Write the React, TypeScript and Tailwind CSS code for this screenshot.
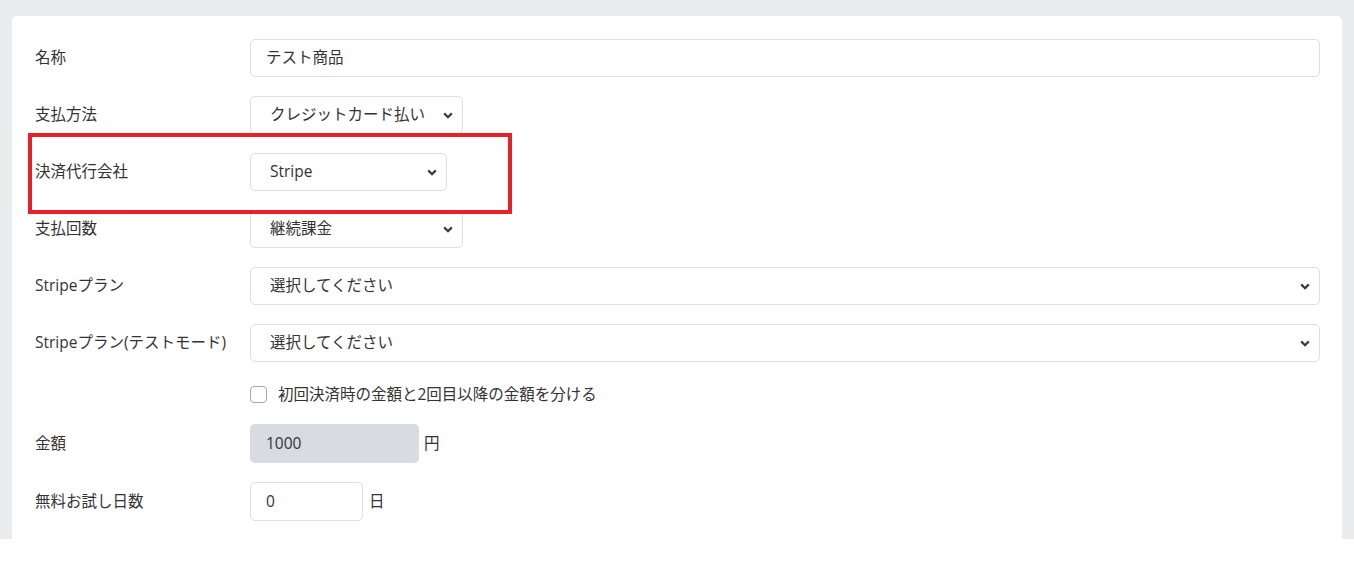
import type { ReactNode } from "react";

const font = { fontFamily: '"Open Sans", "Noto Sans CJK JP", sans-serif' };

function Chevron() {
  return (
    <svg width="10" height="7" viewBox="0 0 10 7" className="shrink-0">
      <path d="M1.2 1.4 L5 5.2 L8.8 1.4" fill="none" stroke="#343a40" strokeWidth="2.2" />
    </svg>
  );
}

function Row({ label, children }: { label?: string; children: ReactNode }) {
  return (
    <div className="flex items-center min-h-[38px]">
      <div className="w-[215px] shrink-0 text-[15.5px] text-[#333]">{label}</div>
      <div className="flex-1 flex items-center">{children}</div>
    </div>
  );
}

function Select({ value, className }: { value: string; className: string }) {
  return (
    <div
      className={`h-[38px] flex items-center justify-between border border-[#dcdfe3] rounded-[5px] bg-white pl-[19px] pr-[9px] text-[15.5px] text-[#333] ${className}`}
    >
      <span>{value}</span>
      <Chevron />
    </div>
  );
}

export default function App() {
  return (
    <div className="h-[539px] overflow-hidden bg-[#ebecee] px-3 pt-4" style={font}>
      <div className="bg-white rounded-[5px] pl-[23px] pr-[22px] pt-[23px] pb-20 flex flex-col gap-[19px]">
        <Row label="名称">
          <div className="h-[38px] w-full flex items-center border border-[#dcdfe3] rounded-[5px] pl-[15px] text-[15.5px] text-[#333]">
            テスト商品
          </div>
        </Row>
        <Row label="支払方法">
          <Select value="クレジットカード払い" className="w-[213px]" />
        </Row>
        <div className="relative">
          <Row label="決済代行会社">
            <Select value="Stripe" className="w-[197px]" />
          </Row>
          <div className="absolute -left-[7px] -top-[20px] w-[484px] h-[81px] border-4 border-[#e8202a] pointer-events-none" />
        </div>
        <Row label="支払回数">
          <Select value="継続課金" className="w-[213px]" />
        </Row>
        <Row label="Stripeプラン">
          <Select value="選択してください" className="w-full" />
        </Row>
        <Row label="Stripeプラン(テストモード)">
          <Select value="選択してください" className="w-full" />
        </Row>
        <div className="flex items-center h-6 pt-[3px]">
          <div className="w-[215px] shrink-0" />
          <div className="w-[17px] h-[17px] border border-[#a3a8ae] rounded-[4px] bg-white" />
          <span className="ml-[11px] text-[15.5px] text-[#333]">初回決済時の金額と2回目以降の金額を分ける</span>
        </div>
        <Row label="金額">
          <div className="h-[39px] w-[169px] flex items-center rounded-[5px] bg-[#d8dbdf] pl-[16px] text-[15.5px] text-[#333]">
            1000
          </div>
          <span className="ml-[5px] text-[15.5px] text-[#333]">円</span>
        </Row>
        <Row label="無料お試し日数">
          <div className="h-[39px] w-[113px] flex items-center border border-[#dcdfe3] rounded-[5px] pl-[15px] text-[15.5px] text-[#333]">
            0
          </div>
          <span className="ml-[6px] text-[15.5px] text-[#333]">日</span>
        </Row>
      </div>
    </div>
  );
}
